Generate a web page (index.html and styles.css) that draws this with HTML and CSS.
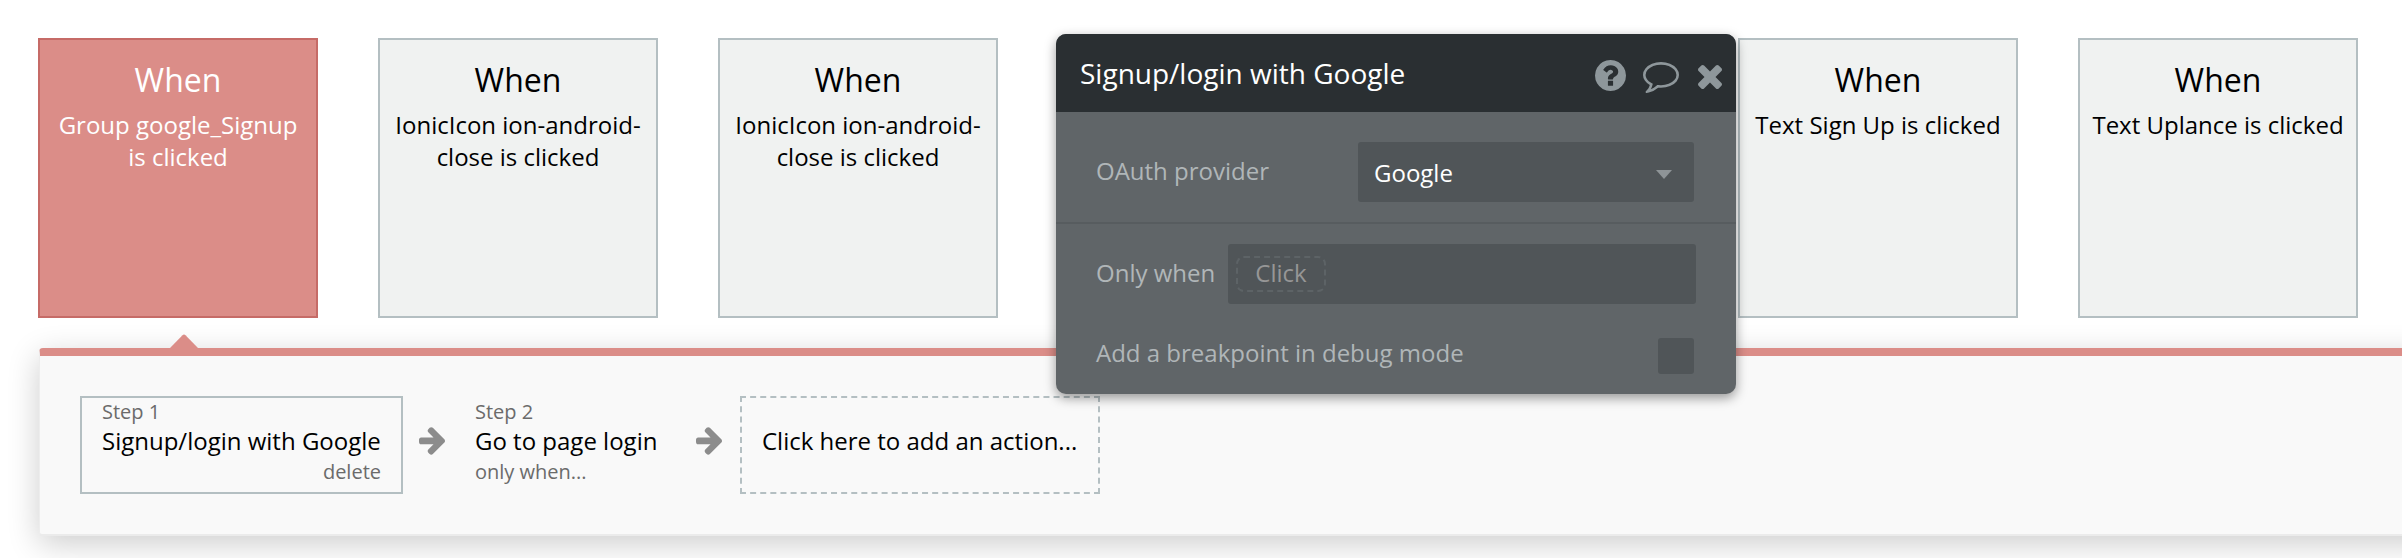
FILE: index.html
```html
<!DOCTYPE html>
<html lang="en">
<head>
<meta charset="utf-8">
<title>Workflow editor</title>
<link rel="stylesheet" href="styles.css">
</head>
<body>
<svg class="sprite" aria-hidden="true">
  <symbol id="arrow" viewBox="128 189 1472 1550"><path d="M1600 960q0 54-37 91l-651 651q-39 37-91 37-51 0-90-37l-75-75q-38-38-38-91t38-91l293-293h-704q-52 0-84.500-37.500t-32.500-90.500v-128q0-53 32.500-90.500t84.500-37.500h704l-293-294q-38-36-38-90t38-90l75-75q38-38 90-38 53 0 91 38l651 651q37 35 37 90z"/></symbol>
</svg>
<main class="editor">
  <section class="events">
    <article class="event selected"><h2>When</h2><p>Group google_Signup is clicked</p></article>
    <article class="event"><h2>When</h2><p>IonicIcon ion-android-close is clicked</p></article>
    <article class="event"><h2>When</h2><p>IonicIcon ion-android-close is clicked</p></article>
    <article class="event"></article>
    <article class="event"></article>
    <article class="event"><h2>When</h2><p>Text Sign Up is clicked</p></article>
    <article class="event"><h2>When</h2><p>Text Uplance is clicked</p></article>
  </section>
  <section class="actions">
    <svg class="pointer" viewBox="0 0 28 14"><path d="M0 14L12.500 1.200Q14 0 15.500 1.200L28 14z"/></svg>
    <div class="step active"><small>Step 1</small><strong>Signup/login with Google</strong><small class="right">delete</small></div>
    <svg class="arrow first"><use href="#arrow"/></svg>
    <div class="step second"><small>Step 2</small><strong>Go to page login</strong><small>only when...</small></div>
    <svg class="arrow"><use href="#arrow"/></svg>
    <div class="step add"><strong>Click here to add an action...</strong></div>
  </section>
</main>
<aside class="popup">
  <header class="popup-head">
    <h1>Signup/login with Google</h1>
    <svg class="help" viewBox="128 128 1536 1536"><path d="M1024 1376v-192q0-14-9-23t-23-9h-192q-14 0-23 9t-9 23v192q0 14 9 23t23 9h192q14 0 23-9t9-23zm256-672q0-88-55.500-163t-138.500-116-170-41q-243 0-371 213-15 24 8 42l132 100q7 6 19 6 16 0 25-12 53-68 86-92 34-24 86-24 48 0 85.500 26t37.500 59q0 38-20 61t-68 45q-63 28-115.500 86.500t-52.500 125.500v36q0 14 9 23t23 9h192q14 0 23-9t9-23q0-19 21.500-49.500t54.500-49.500q32-18 49-28.500t46-35 44.500-48 28-60.500 12.500-81zm384 192q0 209-103 385.500t-279.500 279.500-385.500 103-385.500-103-279.500-279.500-103-385.500 103-385.500 279.500-279.500 385.500-103 385.500 103 279.500 279.500 103 385.500z"/></svg>
    <svg class="comment" viewBox="0 256 1792 1536"><path d="M896 384q-204 0-381.500 69.500t-282 187.500-104.500 255q0 112 71.500 213.500t201.500 175.500l87 50-27 96q-24 91-70 172 152-63 275-171l43-38 57 6q69 8 130 8 204 0 381.500-69.500t282-187.500 104.500-255-104.500-255-282-187.500-381.500-69.500zm896 512q0 174-120 321.500t-326 233-450 85.500q-70 0-145-8-198 175-460 242-49 14-114 22h-5q-15 0-27-10.500t-16-27.500v-1q-3-4-.5-12t2-10 4.500-9.500l6-9 7-8.500 8-9q7-8 31-34.500t34.500-38 31-39.500 32.500-51 27-59 26-76q-157-89-247.500-220t-90.500-281q0-174 120-321.500t326-233 450-85.500 450 85.500 326 233 120 321.500z"/></svg>
    <svg class="close" viewBox="302 366 1188 1188"><path d="M1490 1322q0 40-28 68l-136 136q-28 28-68 28t-68-28l-294-294-294 294q-28 28-68 28t-68-28l-136-136q-28-28-28-68t28-68l294-294-294-294q-28-28-28-68t28-68l136-136q28-28 68-28t68 28l294 294 294-294q28-28 68-28t68 28l136 136q28 28 28 68t-28 68l-294 294 294 294q28 28 28 68z"/></svg>
  </header>
  <div class="row provider">
    <label>OAuth provider</label>
    <div class="select"><span>Google</span><svg viewBox="0 0 16 9"><path d="M0 0h16L8 9z"/></svg></div>
  </div>
  <div class="row condition">
    <label>Only when</label>
    <div class="expression"><span class="chip">Click</span></div>
  </div>
  <div class="row debug">
    <label>Add a breakpoint in debug mode</label>
    <span class="checkbox"></span>
  </div>
</aside>
</body>
</html>
```
FILE: styles.css
```css
* { box-sizing: border-box; }
body {
  margin: 0;
  width: 2402px;
  height: 558px;
  overflow: hidden;
  position: relative;
  background: #fff;
  color: #000;
  font: 24px/32px "Open Sans", "Noto Sans", sans-serif;
}
h1, h2, p { margin: 0; font-weight: 400; }
svg { display: block; flex: none; }
.sprite { position: absolute; width: 0; height: 0; }

.events { display: flex; gap: 60px; padding: 38px 0 0 38px; }
.event {
  flex: none;
  width: 280px;
  height: 280px;
  padding: 18px 10px;
  border: 2px solid #b4bfc2;
  background: #f0f2f1;
  text-align: center;
  position: relative;
  z-index: 1;
}
.event h2 { font-size: 32px; line-height: 44px; margin-bottom: 7px; }
.event.selected { background: #db8d88; border-color: #c66b67; color: #fff; }

.actions {
  position: relative;
  display: flex;
  height: 188px;
  width: 2420px;
  margin: 30px 0 0 39px;
  padding: 40px 0 0 40px;
  border-top: 8px solid #db8d88;
  border-bottom: 2px solid #ebebeb;
  border-left: 1px solid #ededed;
  border-radius: 4px 0 0 4px;
  background: #f9f9f9;
  box-shadow: 0 8px 32px rgba(0, 0, 0, .2);
}
.pointer { position: absolute; left: 130px; top: -22px; width: 28px; height: 14px; fill: #db8d88; }
.step {
  flex: none;
  height: 98px;
  padding: 4px 20px;
  border: 2px solid transparent;
  display: flex;
  flex-direction: column;
  white-space: nowrap;
}
.step small { font-size: 20px; line-height: 20px; color: #6b6b6b; }
.step small:first-child { height: 23px; }
.step strong { font-weight: 400; line-height: 32px; height: 37px; }
.step .right { align-self: flex-end; }
.active { width: 323px; border-color: #b4bfc2; }
.second { width: 227px; margin-left: 8px; }
.add { width: 360px; margin-left: 18px; border: 2px dashed #b4bfc2; padding-top: 27px; }
.arrow { width: 26px; height: 28px; margin-top: 31px; fill: #8c8c8c; margin-left: 16px; }

.popup {
  position: absolute;
  z-index: 2;
  left: 1056px;
  top: 34px;
  width: 680px;
  height: 360px;
  border-radius: 10px;
  overflow: hidden;
  background: #606568;
  box-shadow: 0 4px 12px rgba(0, 0, 0, .4);
  color: #b0b6b8;
}
.popup-head {
  height: 78px;
  padding-left: 24px;
  display: flex;
  background: #2a2f32;
  fill: #8e979b;
}
.popup-head h1 { width: 515px; padding-top: 19px; font-size: 28px; line-height: 40px; color: #fff; }
.help { width: 31px; height: 31px; margin-top: 26px; }
.comment { width: 36px; height: 31px; margin: 28px 0 0 17px; }
.close { width: 24px; height: 24px; margin: 31px 0 0 19px; }
.row { display: flex; padding-left: 40px; white-space: nowrap; }
.provider { height: 112px; padding-top: 30px; border-bottom: 2px solid #575c5f; }
.provider label { width: 262px; padding-top: 13px; }
.select {
  width: 336px;
  height: 60px;
  padding: 0 22px 0 16px;
  border-radius: 3px;
  background: #505558;
  color: #fff;
  display: flex;
  align-items: center;
  justify-content: space-between;
}
.select svg { width: 16px; height: 9px; margin-top: 5px; fill: #8e9497; }
.select span { padding-top: 2px; }
.condition { height: 80px; padding-top: 20px; }
.condition label { width: 132px; padding-top: 13px; }
.expression { width: 468px; height: 60px; padding: 12px 8px; border-radius: 3px; background: #505558; }
.chip {
  display: block;
  width: 90px;
  height: 36px;
  border: 2px dashed #5d6366;
  border-radius: 8px;
  line-height: 30px;
  text-align: center;
  color: #969696;
}
.debug { padding-top: 34px; }
.debug label { width: 562px; margin-top: -1px; }
.checkbox { width: 36px; height: 36px; border-radius: 3px; background: #505558; }
```
